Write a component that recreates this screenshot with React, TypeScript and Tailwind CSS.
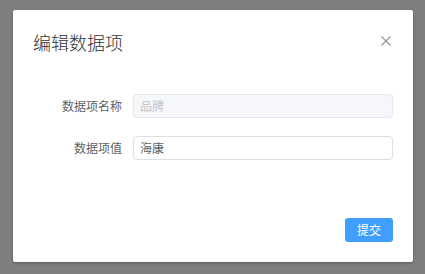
import React from "react";

export default function App() {
  const font = { fontFamily: '"Noto Sans CJK SC", "Noto Sans", sans-serif' };
  return (
    <div className="w-[425px] h-[274px] bg-[#7f7f7f] pt-[10px] pl-[13px]" style={font}>
      <div className="w-[400px] h-[252px] bg-white rounded-[2px] shadow-[0_1px_3px_rgba(0,0,0,0.3)] flex flex-col">
        <div className="flex items-center justify-between pt-[20px] pb-[10px] pl-[20px] pr-[22px]">
          <span className="text-[18px] leading-[24px] text-[#303133] font-light">编辑数据项</span>
          <svg width="10" height="10" viewBox="0 0 10 10" className="mt-[-2px]">
            <path d="M0.5 0.5 L9.5 9.5 M9.5 0.5 L0.5 9.5" stroke="#909399" strokeWidth="1.1" fill="none" />
          </svg>
        </div>
        <div className="flex flex-col gap-[18px] pt-[30px] pb-[48px] px-[20px]">
          <div className="flex items-center h-[24px]">
            <label className="w-[100px] pr-[11px] text-right text-[12px] text-[#606266] leading-[24px]">数据项名称</label>
            <div className="flex-1 h-[24px] border border-[#e4e7ed] bg-[#f5f7fa] rounded-[4px] pl-[6px] flex items-center text-[12px] text-[#c0c4cc]">
              品牌
            </div>
          </div>
          <div className="flex items-center h-[24px]">
            <label className="w-[100px] pr-[11px] text-right text-[12px] text-[#606266] leading-[24px]">数据项值</label>
            <div className="flex-1 h-[24px] border border-[#dcdfe6] bg-white rounded-[4px] pl-[6px] flex items-center text-[12px] text-[#606266]">
              海康
            </div>
          </div>
        </div>
        <div className="mt-auto flex justify-end pt-[10px] px-[20px] pb-[20px]">
          <button className="w-[48px] h-[24px] bg-[#409eff] text-white text-[12px] rounded-[3px] flex items-center justify-center">
            提交
          </button>
        </div>
      </div>
    </div>
  );
}
